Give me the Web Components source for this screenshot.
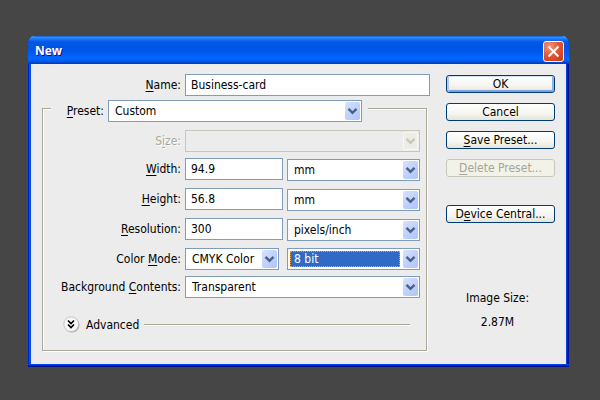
<!DOCTYPE html>
<html lang="en">
<head>
<meta charset="utf-8">
<title>New</title>
<style>
  body {
    margin: 0;
    padding: 36px 31px 33px 28px;
    background: #464646;
    color: #000;
    font: 12px/16px "DejaVu Sans Condensed", "DejaVu Sans", sans-serif;
  }
</style>
</head>
<body>
<new-document-dialog></new-document-dialog>

<template id="xp-window">
  <style>
    :host {
      display: block;
      overflow: hidden;
      border-radius: 7px 7px 0 0;
      background: linear-gradient(to right, #0023d0 0 1px, #0050e8 1px 3px, transparent 3px calc(100% - 3px), #0440e6 calc(100% - 3px) calc(100% - 2px), #0018b8 calc(100% - 2px) calc(100% - 1px), #00118f calc(100% - 1px)), #ececec;
    }
    header {
      display: flex;
      align-items: center;
      justify-content: space-between;
      height: 28px;
      padding: 0 5px 0 7px;
      box-sizing: border-box;
      background: linear-gradient(#0042c8 0, #3a92ff 1px, #1a78f8 3px, #0058e6 6px, #0054e3 11px, #0058ee 16px, #0066ff 22px, #0063fa 24px, #0050dc 26px, #0038b8 28px);
    }
    h1 {
      margin: 0;
      padding-top: 2px;
      color: #fff;
      font: bold 12px/16px "Open Sans", "Noto Sans", sans-serif;
      text-shadow: 1px 1px 0 #0f1089;
    }
    button {
      display: grid;
      place-items: center;
      width: 21px;
      height: 21px;
      margin-top: 2px;
      padding: 0;
      border: 1px solid #fff;
      border-radius: 3px;
      background: radial-gradient(circle at 30% 25%, #f09a7c, #e0593a 45%, #cf3a14 90%);
    }
    main { padding: 10px 14px 13px; }
    footer {
      height: 3px;
      background: linear-gradient(#0046e8 0 1px, #001fc0 1px 2px, #001190 2px);
    }
  </style>
  <header>
    <h1></h1>
    <button type="button" aria-label="Close">
      <svg width="13" height="13" viewBox="0 0 13 13" fill="none" stroke="#fff" stroke-width="2"><path d="M1.5 1.5l10 10M11.5 1.5l-10 10"/></svg>
    </button>
  </header>
  <main><slot></slot></main>
  <footer></footer>
</template>

<template id="xp-group">
  <style>
    :host { display: block; }
    fieldset {
      min-width: 0;
      margin: 0;
      padding: 0 6px 17px 0;
      border: 1px solid #aca899;
      box-shadow: 1px 1px 0 #fff, inset 1px 1px 0 #fff;
    }
    .caption {
      margin: -9px 52px 8px 8px;
      padding-right: 6px;
      background: #ececec;
      --label: 53px;
    }
    .rows { display: grid; gap: 6px; --label: 138px; }
  </style>
  <fieldset aria-label="Preset settings">
    <div class="caption"><slot name="caption"></slot></div>
    <div class="rows"><slot></slot></div>
  </fieldset>
</template>

<template id="xp-field">
  <style>
    :host {
      display: grid;
      grid-template-columns: var(--label) minmax(0, 1fr);
      column-gap: 4px;
      align-items: start;
    }
    label { text-align: right; line-height: 22px; white-space: nowrap; }
    :host([disabled]) label { color: #aca899; text-shadow: 1px 1px 0 #fff; }
    .controls { display: flex; justify-content: space-between; }
    .main { flex: 1; min-width: 0; }
    :host([split]) .main { flex: none; width: var(--main, 98px); }
    ::slotted([slot="unit"]) { flex: none; width: calc(100% - 102px); }
    .edit {
      box-sizing: border-box;
      width: 100%;
      height: 22px;
      padding: 0 5px;
      border: 1px solid #7f9db9;
      border-radius: 0;
      background: #fff;
      color: inherit;
      font: inherit;
      outline: 0;
      display: block;
    }
  </style>
  <label for="control"><slot></slot></label>
  <div class="controls">
    <div class="main"></div>
    <slot name="unit"></slot>
  </div>
</template>

<template id="select-parts">
  <style>
    .combo { position: relative; display: block; }
    .combo select {
      appearance: none;
      display: block;
      box-sizing: border-box;
      width: 100%;
      height: 22px;
      margin: 0;
      padding: 0 18px 0 6px;
      border: 1px solid #7f9db9;
      border-radius: 0;
      background: #fff;
      color: inherit;
      font: inherit;
      outline: 0;
    }
    .combo svg {
      position: absolute;
      inset: 2px 2px 2px auto;
      width: 15px;
      height: 18px;
      border-radius: 2px;
      background: linear-gradient(135deg, #d6e2fd, #bccffc 60%, #aec5fa);
      color: #4d6185;
      pointer-events: none;
    }
    .combo select:disabled { border-color: #c9c7ba; background: #ececec; opacity: 1; }
    .combo select:disabled + svg {
      background: #eeede5;
      box-shadow: inset 0 0 0 1px #f8f7f1;
      color: #c9c7ba;
    }
    .combo.active select {
      background: linear-gradient(#316ac5, #316ac5) 2px 2px / calc(100% - 21px) 16px no-repeat #fff;
      color: #fff;
    }
    .combo.active::after {
      content: "";
      position: absolute;
      inset: 3px 20px 3px 3px;
      border: 1px dotted #e8a33c;
      pointer-events: none;
    }
  </style>
  <span class="combo">
    <select><option></option></select>
    <svg viewBox="0 0 15 18" fill="none" stroke="currentColor" stroke-width="2.4"><path d="M3.5 6.8l4 4 4-4"/></svg>
  </span>
</template>

<template id="xp-button">
  <style>
    :host { display: block; }
    button {
      display: block;
      box-sizing: border-box;
      width: 100%;
      height: 18px;
      padding: 0;
      border: 1px solid #003c74;
      border-radius: 3px;
      background: linear-gradient(#fff, #f6f5f0 60%, #e6e4da);
      color: inherit;
      font: inherit;
      line-height: 16px;
      white-space: nowrap;
    }
    :host([default]) button { box-shadow: inset 0 1px #cee0fc, inset 2px 0 #b3c9f0, inset -2px 0 #8fb0e8, inset 0 -2px #7f9fe0; }
    button:disabled { border-color: #c9c7ba; background: #f3f2e8; color: #a5a598; }
  </style>
  <button type="button"><slot></slot></button>
</template>

<template id="xp-expander">
  <style>
    :host { display: flex; align-items: center; gap: 5px; }
    button {
      display: flex;
      align-items: center;
      gap: 6px;
      padding: 0;
      border: 0;
      background: none;
      color: inherit;
      font: inherit;
    }
    svg { display: block; }
    hr { flex: 1; margin: 0; border: 0; border-top: 1px solid #aca899; border-bottom: 1px solid #fff; }
  </style>
  <button type="button" aria-expanded="false">
    <svg width="17" height="17" viewBox="0 0 17 17" fill="none">
      <circle cx="9" cy="9" r="7.5" fill="#aaa"/>
      <circle cx="8.2" cy="8.2" r="7.4" fill="#f7f7f7" stroke="#bdbdbd" stroke-width=".8"/>
      <path d="M5 4.5l3 3 3-3M5 8.5l3 3 3-3" stroke="#000" stroke-width="1.6"/>
    </svg>
    <slot></slot>
  </button>
  <hr>
</template>

<template id="new-document-dialog">
  <style>
    :host { display: block; }
    form { display: grid; grid-template-columns: minmax(0, 1fr) 109px; column-gap: 16px; }
    u { text-decoration-thickness: 1px; text-underline-offset: 2px; }
    .name { --label: 139px; }
    xp-group { margin: 12px 3px 0 0; }
    .numeric { padding-bottom: 2px; }
    .numeric [slot="unit"] { margin-top: 1px; margin-bottom: -1px; }
    .mode { --main: 94px; }
    xp-expander { margin: 12px 10px 0 20px; }
    aside { display: flex; flex-direction: column; gap: 10px; padding-top: 1px; }
    .device { margin-top: 18px; }
    dl { margin: 53px 0 0; padding-right: 6px; text-align: center; line-height: 24px; }
    dd { margin: 0; }
  </style>
  <xp-window heading="New">
    <form>
      <div>
        <xp-field class="name" value="Business-card"><u>N</u>ame:</xp-field>
        <xp-group>
          <xp-field slot="caption" type="select" value="Custom"><u>P</u>reset:</xp-field>
          <xp-field type="select" value="" disabled>S<u>i</u>ze:</xp-field>
          <xp-field class="numeric" split value="94.9"><u>W</u>idth:<xp-select slot="unit" label="Width unit" value="mm"></xp-select></xp-field>
          <xp-field class="numeric" split value="56.8"><u>H</u>eight:<xp-select slot="unit" label="Height unit" value="mm"></xp-select></xp-field>
          <xp-field class="numeric" split value="300"><u>R</u>esolution:<xp-select slot="unit" label="Resolution unit" value="pixels/inch"></xp-select></xp-field>
          <xp-field class="mode" split type="select" value="CMYK Color">Color <u>M</u>ode:<xp-select slot="unit" label="Bit depth" value="8 bit" active></xp-select></xp-field>
          <xp-field type="select" value="Transparent">Background <u>C</u>ontents:</xp-field>
          <xp-expander>Advanced</xp-expander>
        </xp-group>
      </div>
      <aside>
        <xp-button default>OK</xp-button>
        <xp-button>Cancel</xp-button>
        <xp-button><u>S</u>ave Preset...</xp-button>
        <xp-button disabled><u>D</u>elete Preset...</xp-button>
        <xp-button class="device">D<u>e</u>vice Central...</xp-button>
        <dl><dt>Image Size:</dt><dd>2.87M</dd></dl>
      </aside>
    </form>
  </xp-window>
</template>

<script>
  const clone = id => document.getElementById(id).content.cloneNode(true);

  class Templated extends HTMLElement {
    connectedCallback() {
      if (this.shadowRoot) return;
      this.attachShadow({ mode: "open" }).append(clone(this.localName));
      this.setup(this.shadowRoot);
    }
    setup() {}
  }

  function buildSelect(host) {
    const parts = clone("select-parts");
    const select = parts.querySelector("select");
    select.options[0].textContent = host.getAttribute("value");
    select.disabled = host.hasAttribute("disabled");
    if (host.hasAttribute("label")) select.setAttribute("aria-label", host.getAttribute("label"));
    parts.querySelector(".combo").classList.toggle("active", host.hasAttribute("active"));
    return { parts, select };
  }

  customElements.define("xp-window", class extends Templated {
    setup(root) { root.querySelector("h1").textContent = this.getAttribute("heading"); }
  });
  customElements.define("xp-group", class extends Templated {});
  customElements.define("xp-expander", class extends Templated {});
  customElements.define("xp-button", class extends Templated {
    setup(root) { root.querySelector("button").disabled = this.hasAttribute("disabled"); }
  });
  customElements.define("xp-select", class extends HTMLElement {
    connectedCallback() {
      if (this.shadowRoot) return;
      const style = document.createElement("style");
      style.textContent = ":host { display: block; }";
      this.attachShadow({ mode: "open" }).append(style, buildSelect(this).parts);
    }
  });
  customElements.define("xp-field", class extends Templated {
    setup(root) {
      const main = root.querySelector(".main");
      if (this.getAttribute("type") === "select") {
        const { parts, select } = buildSelect(this);
        select.id = "control";
        main.append(parts);
      } else {
        const input = document.createElement("input");
        input.type = "text";
        input.id = "control";
        input.className = "edit";
        input.value = this.getAttribute("value");
        main.append(input);
      }
    }
  });
  customElements.define("new-document-dialog", class extends Templated {});
</script>
</body>
</html>
